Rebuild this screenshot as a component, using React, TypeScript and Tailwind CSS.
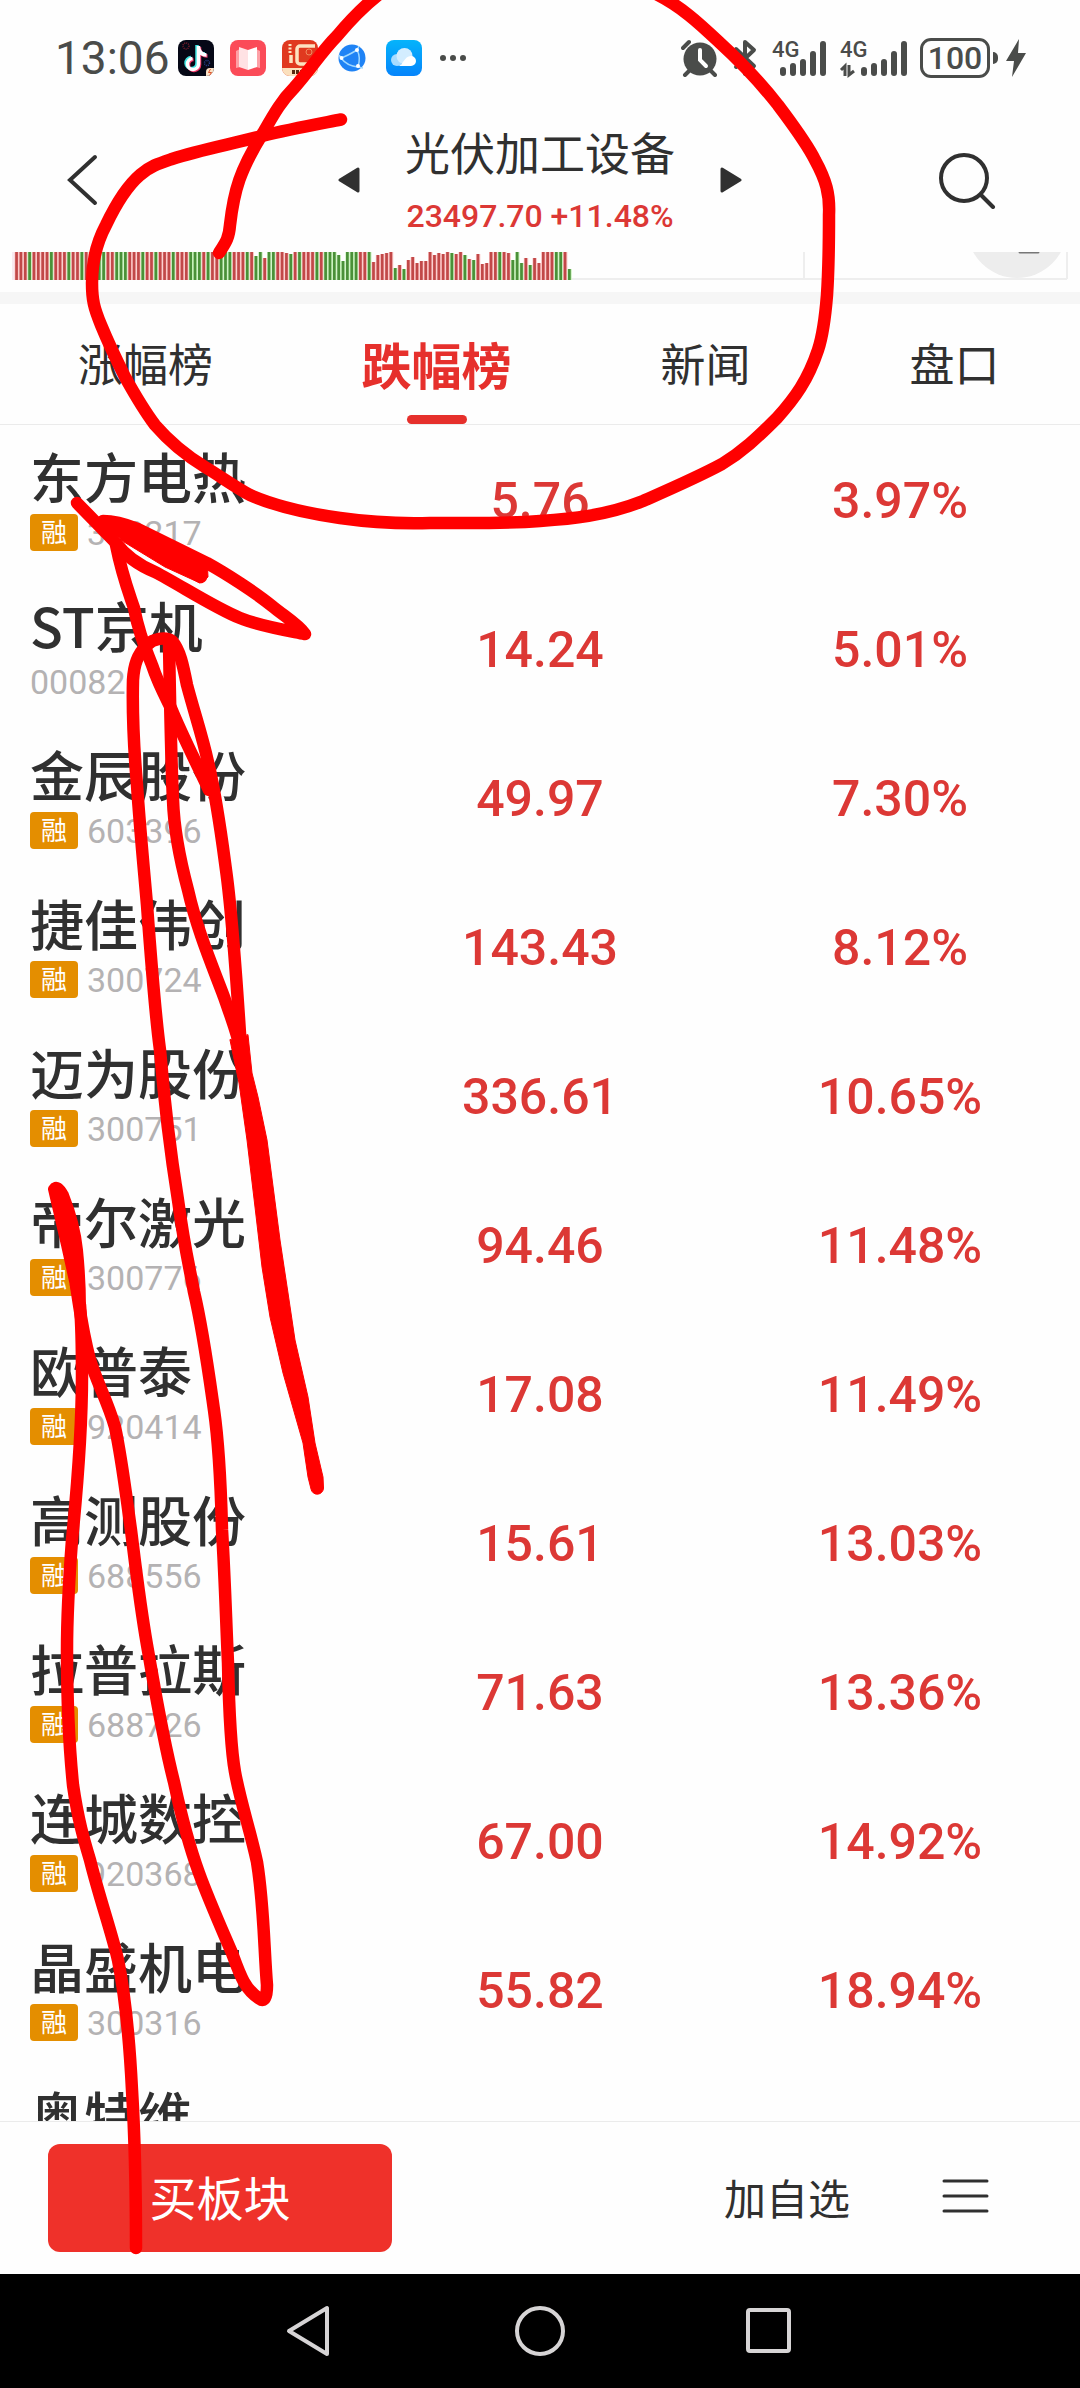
type Stock = {
    name: string;
    code: string;
    margin: boolean;
    price: string;
    change: string;
};

const stocks: Stock[] = [
    { name: "东方电热", code: "300217", margin: true, price: "5.76", change: "3.97%" },
    { name: "ST京机", code: "000821", margin: false, price: "14.24", change: "5.01%" },
    { name: "金辰股份", code: "603396", margin: true, price: "49.97", change: "7.30%" },
    { name: "捷佳伟创", code: "300724", margin: true, price: "143.43", change: "8.12%" },
    { name: "迈为股份", code: "300751", margin: true, price: "336.61", change: "10.65%" },
    { name: "帝尔激光", code: "300776", margin: true, price: "94.46", change: "11.48%" },
    { name: "欧普泰", code: "920414", margin: true, price: "17.08", change: "11.49%" },
    { name: "高测股份", code: "688556", margin: true, price: "15.61", change: "13.03%" },
    { name: "拉普拉斯", code: "688726", margin: true, price: "71.63", change: "13.36%" },
    { name: "连城数控", code: "920368", margin: true, price: "67.00", change: "14.92%" },
    { name: "晶盛机电", code: "300316", margin: true, price: "55.82", change: "18.94%" },
    { name: "奥特维", code: "", margin: false, price: "", change: "" },
];

const tabs = ["涨幅榜", "跌幅榜", "新闻", "盘口"];

// R = up, G = down, the number is the bar height (full height when missing)
const volume =
    "R R R G R R R R G R R R G R R G R R R G G R R G G G R R R G R R G R R R G R R R G G G R G R R G G G R R R G R G24 G R22 G G R R R27 " +
    "G26 R G R R R G R G G G G25 G19 G G G R R G R18 R25 R26 R27 R G12 R15 G11 R20 R23 R17 R19 R19 R R25 R27 R26 R G27 R26 R G25 R21 G20 R26 R16 R17 " +
    "R R G R R27 G20 G G17 R22 G15 R22 R17 R R R G G R G11";

const bars = volume.split(" ").map((token) => ({
    up: token[0] === "R",
    height: Number(token.slice(1)) || 28,
}));

function StatusBar() {
    return (
        <div className="flex h-[116px] shrink-0 items-center justify-between pr-[54px] pl-[55px] font-[Roboto,sans-serif] text-[#4a4c4a]">
            <div className="flex items-center">
                <span className="w-[123px] text-[46px] leading-none">13:06</span>
                <div className="flex items-center gap-4">
                    {/* Short video */}
                    <svg className="h-9 w-9" viewBox="0 0 36 36">
                        <rect width="36" height="36" rx="8" fill="#060816" />
                        <circle cx="8" cy="6" r="3" fill="none" stroke="#7c1d2c" strokeWidth="1.5" strokeDasharray="1 1" />
                        <circle cx="29" cy="23" r="2.5" fill="none" stroke="#26408f" strokeWidth="1.5" strokeDasharray="1 1" />
                        <g fill="none" strokeWidth="3.500">
                            <path d="M19 5v18a5.500 5.500 0 1 1-6-5.500M19 7c1 4 4 7 8 7" stroke="#3fe5e2" />
                            <path d="M21.500 7v18a5.500 5.500 0 1 1-6-5.500M21.500 9c1 4 4 7 8 7" stroke="#f2386a" />
                            <path d="M20.500 6v18a5.500 5.500 0 1 1-6-5.500M20.500 8c1 4 4 7 8 7" stroke="#fff" />
                        </g>
                        <path d="M28 36v-4a4 4 0 0 1 4-4h4a8 8 0 0 1-8 8z" fill="#fbe3c8" />
                        <path d="M32.500 29l-2 3.500h3l-2 3" fill="none" stroke="#e0542c" />
                    </svg>
                    {/* Reader */}
                    <svg className="h-9 w-9" viewBox="0 0 36 36">
                        <rect width="36" height="36" rx="8" fill="#fb4b58" />
                        <path d="M6 11l4-2v18l-4 1zM30 11l-4-2v18l4 1z" fill="#fda0a6" />
                        <path d="M9 7l9 3v20l-9-3z" fill="#ffe2e4" />
                        <path d="M27 7l-9 3v20l9-3z" fill="#fff" />
                    </svg>
                    {/* Brokerage */}
                    <svg className="h-9 w-9" viewBox="0 0 36 36">
                        <rect width="36" height="36" rx="8" fill="#e0391f" />
                        <path d="M0 28h36a8 8 0 0 1-8 8H8a8 8 0 0 1-8-8z" fill="#fbe0bd" />
                        <path d="M33 6H18a3 3 0 0 0-3 3v12a3 3 0 0 0 3 3h14M9 15v8" fill="none" stroke="#fde2c0" strokeWidth="3.500" />
                        <path d="M8 4v9" stroke="#fde2c0" strokeWidth="3" strokeDasharray="2 1.500" />
                        <circle cx="27" cy="12" r="3" fill="none" stroke="#f08a60" />
                        <path d="M10 32h12" stroke="#5a2a12" strokeWidth="4" strokeDasharray="3 1" />
                    </svg>
                    {/* Browser */}
                    <svg className="h-9 w-9" viewBox="0 0 36 36">
                        <circle cx="18" cy="18" r="13.500" fill="#1f83f5" />
                        <g fill="none" stroke="#9fd8ff" strokeWidth="1.500">
                            <path d="M7 18Q13 16 23 10Q27 17 24 27Q13 26 7 18zM23 10l2-4M24 27l5 1M7 18l-2-3" />
                        </g>
                        <circle cx="7.500" cy="18" r="2" fill="#fff" />
                        <circle cx="23" cy="10" r="2" fill="#fff" />
                        <circle cx="24" cy="26" r="2" fill="#fff" />
                    </svg>
                    {/* Cloud drive */}
                    <svg className="h-9 w-9" viewBox="0 0 36 36">
                        <defs>
                            <linearGradient id="cloud" x1="0" y1="0" x2="0" y2="1">
                                <stop offset="0" stopColor="#05b4fb" />
                                <stop offset="1" stopColor="#0584fb" />
                            </linearGradient>
                        </defs>
                        <rect width="36" height="36" rx="8" fill="url(#cloud)" />
                        <circle cx="11" cy="20" r="6" fill="#a9dcff" />
                        <circle cx="18.500" cy="16" r="8" fill="#d3edff" />
                        <path d="M12 26c5 0 6-10 13-10a5 5 0 0 1 0 10z" fill="#fff" />
                    </svg>
                    <svg className="h-2 w-8" viewBox="0 0 32 8" fill="currentColor">
                        <circle cx="5" cy="4" r="3" />
                        <circle cx="15" cy="4" r="3" />
                        <circle cx="25" cy="4" r="3" />
                    </svg>
                </div>
            </div>

            <div className="flex items-center">
                {/* Alarm */}
                <svg className="mr-4 h-[38px] w-9" viewBox="0 0 36 38">
                    <circle cx="19" cy="20" r="16.500" fill="currentColor" />
                    <path d="M2 9l6-6M8 32l-4 4M30 32l4 4" stroke="currentColor" strokeWidth="4" strokeLinecap="round" />
                    <path d="M19 11v10l6 6" fill="none" stroke="#fff" strokeWidth="4" strokeLinecap="round" />
                </svg>
                {/* Bluetooth */}
                <svg className="mr-4 h-[38px] w-6" viewBox="0 0 24 38" fill="none" stroke="currentColor" strokeWidth="4" strokeLinejoin="round" strokeLinecap="round">
                    <path d="M3 10l18 17-9 8V3l9 8L3 28" />
                </svg>
                {/* Signal of both SIM cards */}
                <svg className="mr-[14px] h-[38px] w-[53px] overflow-visible" viewBox="0 0 53 38" fill="none" stroke="currentColor">
                    <text x="-1" y="18" fontSize="22" fontWeight="500" fill="currentColor" stroke="none">4G</text>
                    <path d="M10 31v3M20 27v7M30 23v11M40 15v19M50 5v29" strokeWidth="6" strokeLinecap="round" />
                </svg>
                <svg className="mr-3 h-[38px] w-[68px] overflow-visible" viewBox="0 0 68 38" fill="none" stroke="currentColor">
                    <text x="0" y="18" fontSize="22" fontWeight="500" fill="currentColor" stroke="none">4G</text>
                    <path d="M1 31l4-4v10M9 26v10l5-4" strokeWidth="3" />
                    <path d="M24 31v3M34 27v7M44 23v11M54 15v19M64 5v29" strokeWidth="6" strokeLinecap="round" />
                </svg>
                <div className="flex h-10 w-[70px] items-center justify-center rounded-[11px] border-3 border-current text-[32px] leading-none font-medium">
                    100
                </div>
                <div className="ml-[3px] h-3 w-[5px] rounded-r-full bg-current" />
                <svg className="ml-2 h-[38px] w-5" viewBox="0 0 20 38" fill="currentColor">
                    <path d="M13 0L0 22h8L6 38l14-24h-8z" />
                </svg>
            </div>
        </div>
    );
}

function Header() {
    return (
        <header className="grid h-[136px] shrink-0 grid-cols-[1fr_auto_1fr] items-center pb-2 text-[#303030]">
            <button aria-label="返回" className="justify-self-start pl-[67px]">
                <svg className="h-[52px] w-8" viewBox="0 0 32 52" fill="none" stroke="currentColor" strokeWidth="4" strokeLinecap="round">
                    <path d="M28 3L3 26l25 23" />
                </svg>
            </button>
            <div className="flex items-center gap-[46px]">
                <button aria-label="上一个">
                    <svg className="h-7 w-[22px]" viewBox="0 0 22 28" fill="currentColor" stroke="currentColor" strokeWidth="3" strokeLinejoin="round">
                        <path d="M2 14L20 3v22z" />
                    </svg>
                </button>
                <div className="flex w-[268px] flex-col items-center gap-3 whitespace-nowrap">
                    <h1 className="text-[45px] leading-[60px]">光伏加工设备</h1>
                    <p className="font-[Roboto,sans-serif] text-[32px] leading-[44px] font-medium text-[#dc3835]">23497.70 +11.48%</p>
                </div>
                <button aria-label="下一个">
                    <svg className="h-7 w-[22px]" viewBox="0 0 22 28" fill="currentColor" stroke="currentColor" strokeWidth="3" strokeLinejoin="round">
                        <path d="M20 14L2 3v22z" />
                    </svg>
                </button>
            </div>
            <button aria-label="搜索" className="justify-self-end pr-[83px]">
                <svg className="h-[58px] w-[58px]" viewBox="0 0 58 58" fill="none" stroke="currentColor" strokeWidth="4" strokeLinecap="round">
                    <circle cx="25" cy="27" r="23" />
                    <path d="M42 44l12 12" />
                </svg>
            </button>
        </header>
    );
}

function VolumeStrip() {
    return (
        <svg className="block w-full shrink-0" viewBox="0 0 1080 40" fill="none">
            <path d="M12 27H1067M804 0v27M1067 0v27" stroke="#eeeeee" strokeWidth="2" />
            <circle cx="1017" cy="-24" r="50" fill="#ededed" />
            <path d="M1020 0h18" stroke="#777" strokeWidth="3" strokeLinecap="round" />
            <rect x="12" width="3" height="28" fill="#f8eaf0" />
            {bars.map((bar, i) => (
                <g key={i}>
                    <rect x={14.5 + i * 4.353} y={28 - bar.height} width="4.4" height={bar.height} fill={bar.up ? "#fbc5c5" : "#c9f2bd"} />
                    <rect x={15.2 + i * 4.353} y={28 - bar.height} width="2.7" height={bar.height} fill={bar.up ? "#c14848" : "#4a9038"} />
                </g>
            ))}
        </svg>
    );
}

function Tabs() {
    return (
        <nav className="grid h-[121px] shrink-0 grid-cols-[291fr_291fr_247fr_251fr] border-b border-[#ebebeb] text-[45px] text-[#303030]">
            {tabs.map((tab, i) => (
                <button key={tab} className="relative flex items-center justify-center pb-0.5">
                    {i === 1 ? (
                        <>
                            <span className="text-[50px] font-bold text-[#e6302c]">{tab}</span>
                            <span className="absolute bottom-0 h-[9px] w-15 rounded-full bg-[#e6302c]" />
                        </>
                    ) : (
                        tab
                    )}
                </button>
            ))}
        </nav>
    );
}

function StockTable() {
    return (
        <div className="min-h-0 flex-1 overflow-hidden">
            <table className="w-full table-fixed border-collapse">
                <tbody>
                    {stocks.map((stock) => (
                        <tr key={stock.name} className="h-[149px] font-[Roboto,'Noto_Sans_CJK_SC',sans-serif]">
                            <td className="p-0 pt-6 pl-[30px] align-top">
                                <div className="font-['Noto_Sans_CJK_SC',sans-serif] text-[54px] leading-[54px] font-medium text-[#303030]">
                                    {stock.name}
                                </div>
                                <div className="mt-[11px] flex h-[37px] items-center gap-[9px]">
                                    {stock.margin && (
                                        <span className="flex h-[37px] w-12 items-center justify-center rounded bg-[#e48e00] text-[26px] leading-none text-white">
                                            融
                                        </span>
                                    )}
                                    <span className="text-[34px] leading-none text-[#b4b2b3]">{stock.code}</span>
                                </div>
                            </td>
                            <td className="p-0 pt-1 text-center text-[50px] font-medium text-[#dc3835]">{stock.price}</td>
                            <td className="p-0 pt-1 text-center text-[50px] font-medium text-[#dc3835]">{stock.change}</td>
                        </tr>
                    ))}
                </tbody>
            </table>
        </div>
    );
}

function ActionBar() {
    return (
        <div className="flex h-[153px] shrink-0 items-center border-t border-[#ebebeb] pr-[91px] pl-12 text-[#303030]">
            <button className="h-[108px] w-[344px] rounded-xl bg-[#ef312a] pb-1 text-[47px] text-white">买板块</button>
            <div className="ml-auto flex items-center gap-[92px] pb-1">
                <button className="text-[42px]">加自选</button>
                <button aria-label="菜单">
                    <svg className="h-9 w-[47px]" viewBox="0 0 47 36" stroke="currentColor" strokeWidth="3" strokeLinecap="round">
                        <path d="M2 3h43M2 18h43M2 33h43" />
                    </svg>
                </button>
            </div>
        </div>
    );
}

function SystemNav() {
    return (
        <div className="flex h-[114px] shrink-0 items-center justify-center gap-[177px] bg-black text-[#d6d4d5]">
            <button aria-label="后退">
                <svg className="h-13 w-13" viewBox="0 0 52 52" fill="none" stroke="currentColor" strokeWidth="4" strokeLinejoin="round">
                    <path d="M4 26L42 3v46z" />
                </svg>
            </button>
            <button aria-label="主页">
                <svg className="h-13 w-13" viewBox="0 0 52 52" fill="none" stroke="currentColor" strokeWidth="4">
                    <circle cx="26" cy="26" r="23" />
                </svg>
            </button>
            <button aria-label="最近任务">
                <svg className="h-13 w-13" viewBox="0 0 52 52" fill="none" stroke="currentColor" strokeWidth="4">
                    <rect x="5" y="5" width="41" height="41" rx="2" />
                </svg>
            </button>
        </div>
    );
}

// Freehand red pen marks drawn over the screen
function PenMarks() {
    return (
        <svg
            className="pointer-events-none absolute inset-0 h-full w-full"
            viewBox="0 0 1080 2388"
            preserveAspectRatio="none"
            fill="none"
            stroke="#ff0000"
            strokeWidth="12.5"
            strokeLinecap="round"
            strokeLinejoin="round"
        >
            <path d="M219 253C226 242 229 238 230 225C234 190 240 170 263 133C275 112 282 100 294 88C310 70 322 51 337 36C352 18 366 4 382 -8" />
            <path d="M652 -8C680 5 700 24 719 42C742 63 760 82 778 105C792 124 806 142 815 160C826 180 830 194 829 215C829 250 828 280 827 295C825 320 823 335 818 350C808 380 795 398 777 418C757 438 742 452 722 464C698 477 668 490 643 501C605 516 570 519 540 521C500 524 470 523 430 523C395 524 368 522 340 518C305 513 275 506 250 495C235 487 220 476 205 467C182 453 168 440 155 425C143 409 135 395 125 377C115 357 108 342 101 325C94 308 92 300 92 283C92 260 98 240 106 225C116 204 126 187 140 175C150 166 160 163 172 159C200 150 232 144 262 136C290 129 318 124 341 119.500" />
            <path d="M77 503L116 543C124 554 136 564 155 572C180 585 215 608 240 618C260 626 285 630 305 634C298 624 284 616 272 606C255 592 225 573 207 563C185 552 160 540 138 529C125 524 112 521 103 521" />
            <path d="M101 517L138 525L165 540L207 558L208 577L200 583L165 567L124 542z" fill="#ff0000" strokeWidth="1" />
            <path d="M110 525L201 577" />
            <path d="M116 545C122 575 128 590 134 608C138 628 142 640 152 665C158 683 163 692 171 708C182 735 195 760 209 790" />
            {/* long narrow loops */}
            <path d="M147 645C137 655 134 665 133 680C132 720 134 750 137 785C140 830 144 870 147 905C151 960 156 1020 160 1050C165 1110 170 1150 178 1200C184 1245 189 1265 194 1292C203 1330 209 1375 214 1410C219 1445 221 1490 222 1530C225 1580 226 1620 228 1663C229 1710 231 1750 235 1772C240 1800 250 1830 257 1862C264 1905 264 1950 267 1985C267 1998 264 2002 260 1999C245 1990 240 1975 232 1953C220 1925 208 1898 199 1873C187 1840 180 1810 174 1782C162 1735 155 1690 147 1645C140 1605 136 1570 131 1530C126 1495 122 1460 115 1427C107 1400 98 1385 90 1360C82 1330 80 1310 76 1285" />
            <path d="M147 645C153 639 165 636 172 641C180 650 183 665 187 685C195 715 202 735 208 762C217 800 222 840 226 870C233 920 238 1000 242 1065" />
            <path d="M169 643C170 700 171 760 173 800C174 830 180 860 188 890C197 930 212 965 224 997C232 1020 238 1035 242 1055" />
            <path
                d="M230 1040L239 1083L247 1140L255 1207L262 1267L270 1317L283 1373L303 1443L308 1477L311 1489A6.300 6.300 0 0 0 323.500 1488L323 1477L315 1443L308 1397L295 1340L288 1293L280 1240L267 1140L258 1097L252 1073L248 1035z"
                fill="#ff0000"
                strokeWidth="1"
            />
            <path d="M53 1189C56 1184 60 1188 64 1195C72 1215 76 1230 78 1250C80 1270 81 1290 81 1307L76 1290L66 1245z" fill="#ff0000" strokeWidth="10" />
            <path d="M80 1305C82 1330 82 1355 82 1375C82 1430 77 1490 72 1540C69 1580 67 1615 67 1650C67 1700 69 1745 73 1785C78 1820 84 1840 90 1860C100 1900 111 1930 118 1960C126 2000 130 2050 132 2090C135 2140 136 2190 136 2248" />
        </svg>
    );
}

export default function App() {
    return (
        <div className="relative flex h-screen flex-col overflow-hidden bg-[#fefefe] font-['Noto_Sans_CJK_SC',sans-serif]">
            <StatusBar />
            <Header />
            <VolumeStrip />
            <div className="h-3 shrink-0 bg-[#f6f6f6]" />
            <Tabs />
            <StockTable />
            <ActionBar />
            <SystemNav />
            <PenMarks />
        </div>
    );
}
